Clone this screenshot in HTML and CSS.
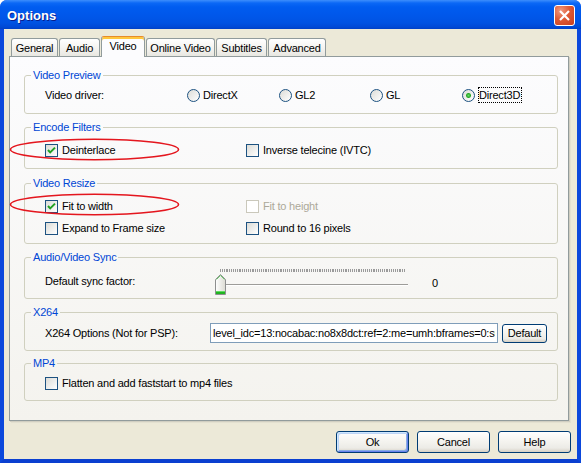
FILE: index.html
```html
<!DOCTYPE html>
<html>
<head>
<meta charset="utf-8">
<title>Options</title>
<link rel="stylesheet" href="styles.css">
</head>
<body>
<div class="window">
  <div class="titlebar">
    <span class="title">Options</span>
    <span class="close">
      <svg width="19" height="19" viewBox="0 0 19 19"><path d="M5 5 L14 14 M14 5 L5 14" stroke="#fff" stroke-width="2.2" fill="none"/></svg>
    </span>
  </div>
  <div class="frame">
    <div class="tabs">
      <div class="tab t1">General</div>
      <div class="tab t2">Audio</div>
      <div class="tab t3 sel">Video</div>
      <div class="tab t4">Online Video</div>
      <div class="tab t5">Subtitles</div>
      <div class="tab t6">Advanced</div>
    </div>
    <div class="panel">
      <fieldset class="group g1">
        <legend>Video Preview</legend>
        <div class="body driver-row">
          <span class="lbl">Video driver:</span>
          <span class="opt"><span class="radio"></span>DirectX</span>
          <span class="opt"><span class="radio"></span>GL2</span>
          <span class="opt"><span class="radio"></span>GL</span>
          <span class="opt"><span class="radio on"></span><span class="focus">Direct3D</span></span>
        </div>
      </fieldset>

      <fieldset class="group g2">
        <legend>Encode Filters</legend>
        <div class="body">
          <div class="cb-row">
            <span class="col"><span class="cb on"><svg width="11" height="11" viewBox="0 0 11 11"><path d="M2 5 L4.2 7.4 L9 2.6" stroke="#21A121" stroke-width="2" fill="none"/></svg></span>Deinterlace</span>
            <span class="col"><span class="cb"></span>Inverse telecine (IVTC)</span>
          </div>
        </div>
      </fieldset>

      <fieldset class="group g3">
        <legend>Video Resize</legend>
        <div class="body rows">
          <div class="cb-row">
            <span class="col"><span class="cb on"><svg width="11" height="11" viewBox="0 0 11 11"><path d="M2 5 L4.2 7.4 L9 2.6" stroke="#21A121" stroke-width="2" fill="none"/></svg></span>Fit to width</span>
            <span class="col disabled"><span class="cb"></span>Fit to height</span>
          </div>
          <div class="cb-row">
            <span class="col"><span class="cb"></span>Expand to Frame size</span>
            <span class="col"><span class="cb"></span>Round to 16 pixels</span>
          </div>
        </div>
      </fieldset>

      <fieldset class="group g4">
        <legend>Audio/Video Sync</legend>
        <div class="body sync-row">
          <span class="sync-lbl">Default sync factor:</span>
          <div class="slider">
            <div class="ticks"></div>
            <div class="track"></div>
            <svg class="thumb" width="11" height="21" viewBox="0 0 11 21">
              <defs>
                <linearGradient id="tg" x1="0" y1="0" x2="1" y2="0">
                  <stop offset="0" stop-color="#FFFFFF"/>
                  <stop offset="1" stop-color="#DCDBD3"/>
                </linearGradient>
              </defs>
              <path d="M0.5 5.5 L5.5 0.5 L10.5 5.5 L10.5 20.5 L0.5 20.5 Z" fill="url(#tg)" stroke="#8E8F8F"/>
              <path d="M1.5 5.5 L5.5 1.5 L9.5 5.5" stroke="#6CCB6C" fill="none"/>
              <rect x="1" y="17" width="9" height="3" fill="#21B421"/>
              <rect x="1" y="17" width="9" height="1" fill="#5FDD5F"/>
            </svg>
          </div>
          <span class="sync-val">0</span>
        </div>
      </fieldset>

      <fieldset class="group g5">
        <legend>X264</legend>
        <div class="body x264-row">
          <span class="x264-lbl">X264 Options (Not for PSP):</span>
          <input class="textbox" type="text" value="level_idc=13:nocabac:no8x8dct:ref=2:me=umh:bframes=0:subme=6:8x8dct=0:trellis=0">
          <span class="btn small">Default</span>
        </div>
      </fieldset>

      <fieldset class="group g6">
        <legend>MP4</legend>
        <div class="body">
          <div class="cb-row">
            <span class="col wide"><span class="cb"></span>Flatten and add faststart to mp4 files</span>
          </div>
        </div>
      </fieldset>
    </div>
    <div class="buttons">
      <span class="btn default">Ok</span>
      <span class="btn">Cancel</span>
      <span class="btn">Help</span>
    </div>
  </div>
  <svg class="mark m1" width="172" height="24" viewBox="0 0 172 24"><ellipse cx="85.5" cy="11.5" rx="84" ry="10.3" fill="none" stroke="#E4161E" stroke-width="1.6"/></svg>
  <svg class="mark m2" width="172" height="24" viewBox="0 0 172 24"><ellipse cx="85.5" cy="11.5" rx="84" ry="10.3" fill="none" stroke="#E4161E" stroke-width="1.6"/></svg>
</div>
</body>
</html>
```

FILE: styles.css
```css
* { box-sizing: border-box; }
html, body { margin: 0; padding: 0; }
body {
  width: 581px;
  height: 463px;
  overflow: hidden;
  background: #ffffff;
  font-family: "Liberation Sans", Arial, sans-serif;
  font-size: 11px;
  letter-spacing: -0.2px;
  color: #000;
}
.window {
  position: relative;
  width: 581px;
  height: 463px;
  display: flex;
  flex-direction: column;
  background: #0A4BE0;
  border-radius: 7px 7px 0 0;
  overflow: hidden;
}
.titlebar {
  height: 29px;
  flex: none;
  display: flex;
  align-items: center;
  padding: 0 6px 0 7px;
  background: linear-gradient(#3D8EFC 0, #0B68F6 3px, #005CF0 7px, #0057EA 16px, #0052E2 23px, #0049D6 27px, #0040C6 29px);
}
.title {
  flex: 1;
  color: #fff;
  font-weight: bold;
  font-size: 13px;
  letter-spacing: 0;
  padding-top: 1px;
  text-shadow: 1px 1px 0 #0A1E8C;
}
.close {
  width: 21px;
  height: 21px;
  margin-top: 2px;
  border: 1px solid #fff;
  border-radius: 3px;
  background: radial-gradient(circle at 30% 25%, #F19A80 0, #DE5A36 45%, #C83D1C 100%);
  display: flex;
  align-items: center;
  justify-content: center;
}
.close svg { display: block; }
.frame {
  flex: 1;
  display: flex;
  flex-direction: column;
  background: #ECE9D8;
  border: 4px solid #0A4BE0;
  border-top: 0;
  border-left-color: #0B48DC;
  border-right-color: #0B48DC;
  border-bottom-color: #0A3FD0;
}
.tabs {
  display: flex;
  align-items: flex-end;
  gap: 1px;
  padding: 7px 0 0 7px;
  height: 27px;
  position: relative;
  z-index: 2;
}
.tab {
  height: 18px;
  border: 1px solid #919B9C;
  border-bottom: 0;
  border-radius: 3px 3px 0 0;
  background: linear-gradient(#FFFFFF, #F3F2EE 60%, #E8E7E1);
  display: flex;
  align-items: center;
  justify-content: center;
  line-height: 14px;
  padding-top: 1px;
}
.t1 { width: 47px; }
.t2 { width: 41px; }
.t3 { width: 44px; }
.t4 { width: 69px; }
.t5 { width: 51px; }
.t6 { width: 58px; }
.tab.sel {
  height: 21px;
  margin-bottom: -1px;
  background: #FCFCFE;
  border-top: 1px solid #E68B2C;
  box-shadow: inset 0 2px 0 #FFC73C;
  padding-top: 0;
  padding-bottom: 3px;
}
.panel {
  margin-left: 5px;
  width: 560px;
  height: 365px;
  border: 1px solid #919B9C;
  background: linear-gradient(#FCFCFE, #F4F3EE);
  box-shadow: 1px 1px 0 #D0CEC1, 2px 2px 0 #E3E0D0;
  padding: 0 0 0 14px;
  display: flex;
  flex-direction: column;
  position: relative;
  z-index: 1;
}
.group {
  margin: 0;
  padding: 0;
  width: 534px;
  min-width: 0;
  border: 1px solid #D0D0BF;
  border-radius: 3px;
}
.group legend {
  margin-left: 6px;
  padding: 0 2px;
  line-height: 13px;
  color: #0046D5;
}
.body { padding-left: 20px; }
.g1 { margin-top: 12px; }
.g1 .body { padding-top: 5px; padding-bottom: 10px; }
.g2 { margin-top: 7px; }
.g2 .body { padding-top: 8px; padding-bottom: 10px; }
.g3 { margin-top: 8px; }
.g3 .body { padding-top: 8px; padding-bottom: 7px; }
.g4 { margin-top: 7px; }
.g4 .body { padding-top: 5px; padding-bottom: 3px; }
.g5 { margin-top: 7px; }
.g5 .body { padding-top: 4px; padding-bottom: 7px; }
.g6 { margin-top: 6px; }
.g6 .body { padding-top: 5px; padding-bottom: 9px; }

.driver-row {
  display: grid;
  grid-template-columns: 142px 92px 91px 92px auto;
  height: 16px;
  align-items: center;
  padding-top: 5px;
  box-sizing: content-box;
}
.opt { display: flex; align-items: center; }
.radio {
  width: 13px;
  height: 13px;
  flex: none;
  border-radius: 50%;
  border: 1px solid #1D5281;
  background: linear-gradient(135deg, #DCDCD7, #FFFFFF);
  margin-right: 3px;
}
.radio.on {
  background: radial-gradient(circle at 50% 50%, #64DC64 0, #29A829 2px, rgba(33,161,33,0) 3px), linear-gradient(135deg, #DCDCD7, #FFFFFF);
}
.focus {
  border: 1px dotted #000;
  padding: 0 1px 0 0;
  line-height: 14px;
}
.rows { display: flex; flex-direction: column; gap: 6px; }
.cb-row { display: flex; height: 16px; align-items: center; }
.col { width: 201px; display: flex; align-items: center; white-space: nowrap; }
.col.wide { width: 400px; }
.cb {
  width: 13px;
  height: 13px;
  flex: none;
  border: 1px solid #1D5281;
  background: linear-gradient(135deg, #DCDCD7, #FFFFFF);
  margin-right: 4px;
  display: flex;
  align-items: center;
  justify-content: center;
}
.cb svg { display: block; }
.col.disabled { color: #ACA899; }
.col.disabled .cb { border-color: #CAC8BB; background: #FFFFFF; }

.sync-row { display: flex; height: 26px; box-sizing: content-box; }
.sync-lbl { width: 170px; padding-top: 5px; line-height: 14px; }
.slider { position: relative; width: 193px; height: 26px; }
.ticks {
  margin-left: 5px;
  width: 186px;
  height: 3px;
  background: repeating-linear-gradient(to right, #9A9A9A 0, #9A9A9A 1px, transparent 1px, transparent 1.86px);
}
.track {
  margin-top: 12px;
  margin-left: 5px;
  width: 188px;
  height: 2px;
  border-top: 1px solid #9D9C99;
  border-bottom: 1px solid #FFFFFF;
}
.thumb { position: absolute; left: 0; top: 5px; display: block; }
.sync-val { margin-left: 24px; padding-top: 7px; line-height: 14px; }

.x264-row { display: flex; align-items: center; height: 20px; box-sizing: content-box; }
.x264-lbl { width: 165px; white-space: nowrap; }
.textbox {
  width: 288px;
  height: 20px;
  margin: 0;
  border: 1px solid #7F9DB9;
  padding: 0 2px;
  background: #fff;
  font-family: "Liberation Sans", Arial, sans-serif;
  font-size: 11px;
  letter-spacing: -0.2px;
  color: #000;
  outline: none;
}
.btn {
  width: 73px;
  height: 22px;
  border: 1px solid #003C74;
  border-radius: 3px;
  background: linear-gradient(#FFFFFF, #F5F4F0 45%, #ECEBE6 80%, #D6D0C5);
  display: flex;
  align-items: center;
  justify-content: center;
  line-height: 14px;
}
.btn.small { width: 45px; height: 19px; margin-left: 4px; }
.btn.default {
  box-shadow: inset 1px 1px 0 #CEE7FF, inset -1px -1px 0 #6982EE, inset 2px 2px 0 #BCD4F6, inset -2px -2px 0 #89ADE4;
}
.buttons {
  display: flex;
  justify-content: flex-end;
  gap: 8px;
  padding-right: 6px;
  margin-top: 10px;
}
.mark { position: absolute; display: block; z-index: 5; }
.m1 { left: 9px; top: 138px; }
.m2 { left: 9px; top: 193px; }
```
